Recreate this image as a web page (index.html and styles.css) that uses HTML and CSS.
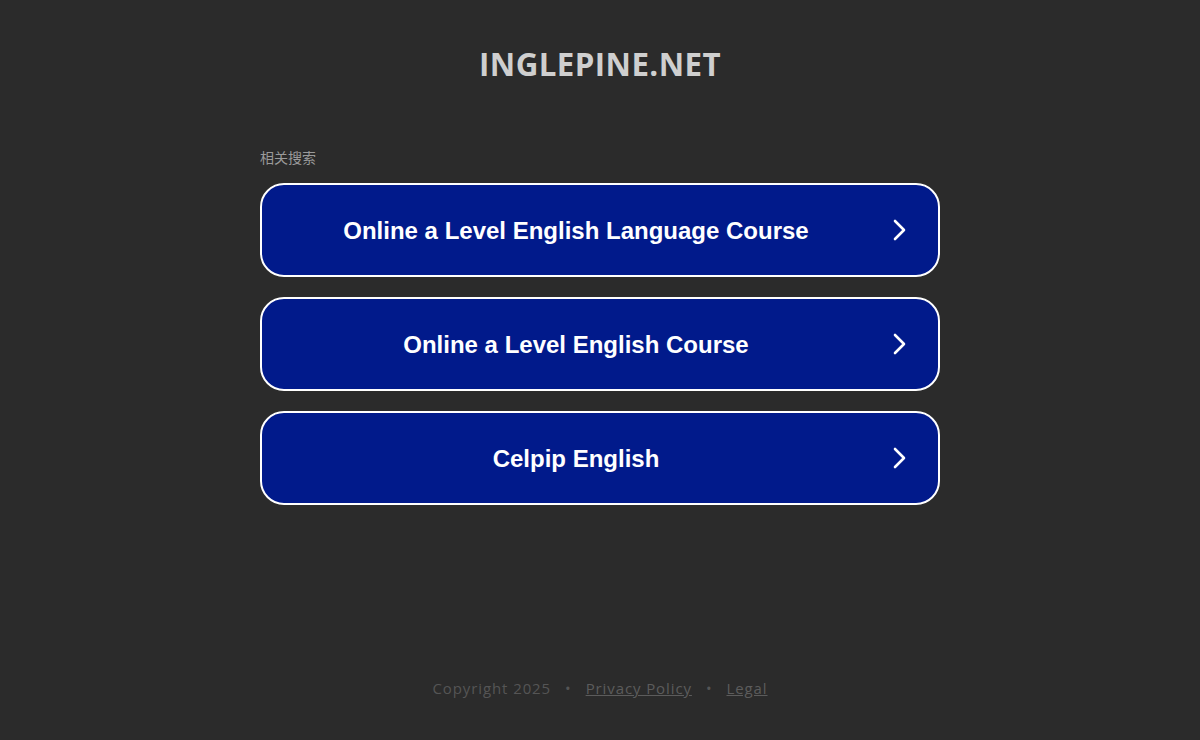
FILE: index.html
```html
<!DOCTYPE html>
<html lang="zh">
<head>
<meta charset="utf-8">
<title>inglepine.net</title>
<link rel="stylesheet" href="styles.css">
</head>
<body>
<div class="page">
  <header class="header">
    <h1 class="site-title">INGLEPINE.NET</h1>
  </header>
  <main class="main">
    <div class="label">相关搜索</div>
    <ul class="links">
      <li><a class="link" href="#"><span class="link-text">Online a Level English Language Course</span><svg class="chev" width="16" height="22" viewBox="0 0 16 22"><path d="M3 2 L12 11 L3 20" fill="none" stroke="#fff" stroke-width="2.6" stroke-linecap="round" stroke-linejoin="round"/></svg></a></li>
      <li><a class="link" href="#"><span class="link-text">Online a Level English Course</span><svg class="chev" width="16" height="22" viewBox="0 0 16 22"><path d="M3 2 L12 11 L3 20" fill="none" stroke="#fff" stroke-width="2.6" stroke-linecap="round" stroke-linejoin="round"/></svg></a></li>
      <li><a class="link" href="#"><span class="link-text">Celpip English</span><svg class="chev" width="16" height="22" viewBox="0 0 16 22"><path d="M3 2 L12 11 L3 20" fill="none" stroke="#fff" stroke-width="2.6" stroke-linecap="round" stroke-linejoin="round"/></svg></a></li>
    </ul>
  </main>
  <footer class="footer">
    <span>Copyright 2025</span><span class="dot">•</span><a href="#">Privacy Policy</a><span class="dot">•</span><a href="#">Legal</a>
  </footer>
</div>
</body>
</html>
```
FILE: styles.css
```css
html, body {
  margin: 0;
  padding: 0;
  background: #2b2b2b;
}
.page {
  height: 740px;
  display: flex;
  flex-direction: column;
  align-items: center;
  font-family: "Open Sans", "DejaVu Sans", sans-serif;
}
.header {
  padding-top: 44px;
}
.site-title {
  margin: 0;
  font-family: "Open Sans", sans-serif;
  font-weight: 700;
  font-size: 31.3px;
  line-height: 40px;
  color: #cfcfcf;
  letter-spacing: 0.4px;
}
.main {
  width: 680px;
  margin-top: 66px;
}
.label {
  font-family: "Noto Sans CJK SC", sans-serif;
  font-size: 14px;
  line-height: 18px;
  color: #9a9a9a;
  margin-top: -2px;
  margin-bottom: 17px;
}
.links {
  list-style: none;
  margin: 0;
  padding: 0;
  display: flex;
  flex-direction: column;
  gap: 20px;
}
.link {
  display: flex;
  align-items: center;
  height: 94px;
  box-sizing: border-box;
  border: 2px solid #ffffff;
  border-radius: 24px;
  background: #011a8b;
  text-decoration: none;
  padding: 0 30px 0 30px;
}
.link-text {
  flex: 1;
  text-align: center;
  font-family: "Liberation Sans", Arial, sans-serif;
  font-weight: 700;
  font-size: 24px;
  color: #ffffff;
  margin-left: -2px;
  padding-top: 2px;
}
.chev {
  flex: none;
  margin-left: 30px;
}
.footer {
  margin-top: auto;
  margin-bottom: 42px;
  font-size: 15px;
  color: #555555;
  letter-spacing: 0.9px;
  display: flex;
}
.footer a {
  color: #5c5c5c;
}
.dot {
  margin: 0 14px;
}
```
